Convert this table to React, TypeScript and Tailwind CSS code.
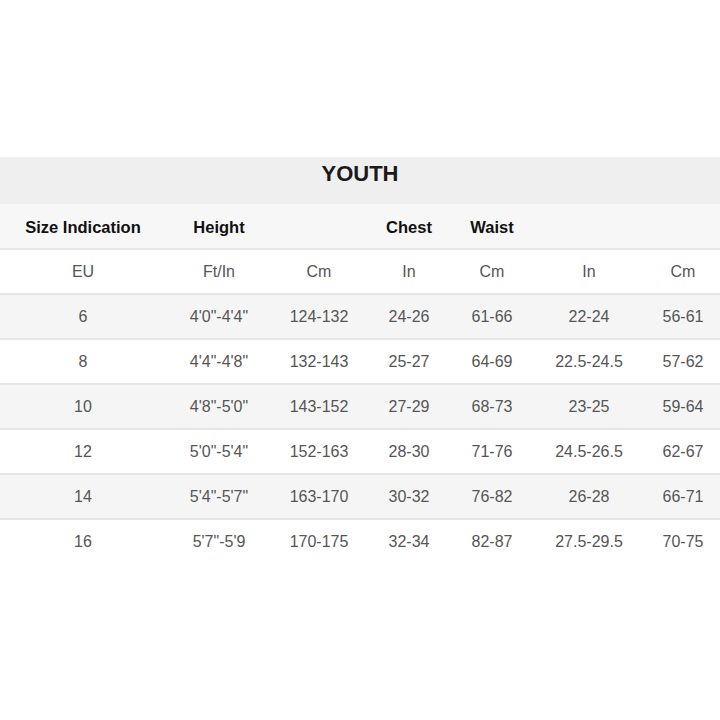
import React from "react";

// Youth size chart
const cols = "grid grid-cols-[166px_106px_94px_86px_80px_114px_74px]";

const units = ["EU", "Ft/In", "Cm", "In", "Cm", "In", "Cm"];

const rows: string[][] = [
  ["6", "4'0\"-4'4\"", "124-132", "24-26", "61-66", "22-24", "56-61"],
  ["8", "4'4\"-4'8\"", "132-143", "25-27", "64-69", "22.5-24.5", "57-62"],
  ["10", "4'8\"-5'0\"", "143-152", "27-29", "68-73", "23-25", "59-64"],
  ["12", "5'0\"-5'4\"", "152-163", "28-30", "71-76", "24.5-26.5", "62-67"],
  ["14", "5'4\"-5'7\"", "163-170", "30-32", "76-82", "26-28", "66-71"],
  ["16", "5'7\"-5'9", "170-175", "32-34", "82-87", "27.5-29.5", "70-75"],
];

const App: React.FC = () => (
  <div className="w-[720px] h-[720px] bg-white pt-[157px] font-['Liberation_Sans',Arial,sans-serif]">
    <div className="h-[47px] bg-[#efefef] flex items-center justify-center">
      <span className="text-[22px] font-bold text-[#1a1a1a] pb-[14px]">YOUTH</span>
    </div>
    <div className={`${cols} h-[44px] bg-[#f7f7f7] items-center text-[16.5px] font-bold text-[#111] pt-[2px]`}>
      <div className="text-center">Size Indication</div>
      <div className="text-center">Height</div>
      <div />
      <div className="text-center">Chest</div>
      <div className="text-center">Waist</div>
      <div />
      <div />
    </div>
    <div className={`${cols} h-[45px] border-t-2 border-[#e6e6e6] bg-white items-center text-[16px] text-[#555]`}>
      {units.map((u, i) => (
        <div key={i} className="text-center">
          {u}
        </div>
      ))}
    </div>
    {rows.map((r, idx) => (
      <div
        key={r[0]}
        className={`${cols} h-[45px] border-t-2 border-[#e6e6e6] items-center text-[16px] text-[#555] ${
          idx % 2 === 0 ? "bg-[#f5f5f5]" : "bg-white"
        }`}
      >
        {r.map((c, i) => (
          <div key={i} className="text-center">
            {c}
          </div>
        ))}
      </div>
    ))}
  </div>
);

export default App;
